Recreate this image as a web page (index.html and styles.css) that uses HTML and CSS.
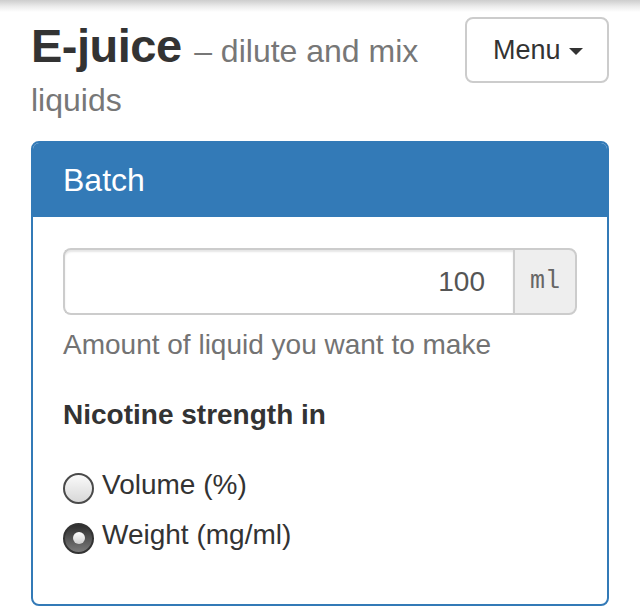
FILE: index.html
```html
<!DOCTYPE html>
<html lang="en">
<head>
    <meta charset="UTF-8">
    <meta name="viewport" content="width=device-width, initial-scale=1.0">
    <title>E-juice - dilute and mix liquids</title>
    <link rel="stylesheet" href="styles.css">
</head>
<body>
    <div class="topbar"></div>

    <div class="page">
        <div class="header">
            <h3 class="title">E-juice <small>– dilute and mix liquids</small></h3>
            <button class="menu-btn" type="button">
                <span>Menu</span>
                <span class="caret"></span>
            </button>
        </div>

        <div class="panel">
            <div class="panel-heading">
                <h3 class="panel-title">Batch</h3>
            </div>
            <div class="panel-body">
                <div class="input-group">
                    <input type="text" class="amount" value="100">
                    <span class="addon">ml</span>
                </div>
                <p class="help">Amount of liquid you want to make</p>

                <label class="group-label">Nicotine strength in</label>

                <label class="radio first">
                    <input type="radio" name="strength" value="volume">
                    <span>Volume (%)</span>
                </label>
                <label class="radio">
                    <input type="radio" name="strength" value="weight" checked>
                    <span>Weight (mg/ml)</span>
                </label>
            </div>
        </div>
    </div>
</body>
</html>
```

FILE: styles.css
```css
* {
    margin: 0;
    padding: 0;
    box-sizing: border-box;
}

body {
    font-family: "Liberation Sans", Arial, Helvetica, sans-serif;
    font-size: 28px;
    line-height: 40px;
    color: #333;
    background: #fff;
}

.topbar {
    height: 12px;
    background: linear-gradient(to bottom, #cdcdcd 0%, #ececec 55%, #fff 100%);
}

.page {
    padding: 5px 31px 0;
}

/* header */

.header {
    display: flex;
    align-items: flex-start;
    justify-content: space-between;
    gap: 20px;
}

.title {
    margin-top: 4px;
    font-size: 47px;
    line-height: 49px;
    font-weight: 700;
    color: #333;
    letter-spacing: -0.5px;
}

.title small {
    font-size: 32px;
    line-height: 1;
    font-weight: 400;
    color: #777;
    letter-spacing: 0;
}

.menu-btn {
    flex: none;
    display: flex;
    align-items: center;
    gap: 8px;
    height: 66px;
    width: 144px;
    padding: 0 26px;
    font-family: inherit;
    font-size: 27px;
    color: #333;
    background: #fff;
    border: 2px solid #ccc;
    border-radius: 8px;
}

.caret {
    width: 0;
    height: 0;
    margin-top: 2px;
    border-top: 7px solid #333;
    border-left: 7px solid transparent;
    border-right: 7px solid transparent;
}

/* panel */

.panel {
    margin-top: 22px;
    border: 2px solid #337ab7;
    border-radius: 8px;
    overflow: hidden;
}

.panel-heading {
    height: 74px;
    display: flex;
    align-items: center;
    padding: 0 30px;
    background: #337ab7;
}

.panel-title {
    font-size: 32px;
    font-weight: 400;
    color: #fff;
}

.panel-body {
    padding: 31px 30px 49px;
}

.input-group {
    display: flex;
    height: 67px;
}

.amount {
    flex: 1;
    min-width: 0;
    padding: 0 28px;
    font-family: inherit;
    font-size: 28px;
    color: #555;
    text-align: right;
    border: 2px solid #ccc;
    border-right: none;
    border-radius: 8px 0 0 8px;
    box-shadow: inset 0 2px 2px rgba(0, 0, 0, 0.1);
    outline: none;
}

.addon {
    width: 64px;
    display: flex;
    align-items: center;
    justify-content: center;
    font-family: "Liberation Mono", "Courier New", monospace;
    font-size: 25px;
    color: #666;
    background: #eee;
    border: 2px solid #ccc;
    border-radius: 0 8px 8px 0;
}

.help {
    margin-top: 10px;
    color: #737373;
}

.group-label {
    display: block;
    margin-top: 30px;
    font-weight: 700;
}

.radio {
    display: flex;
    align-items: center;
    gap: 8px;
    margin-top: 10px;
}

.radio.first {
    margin-top: 30px;
}

.radio input {
    appearance: none;
    -webkit-appearance: none;
    flex: none;
    width: 31px;
    height: 31px;
    margin-top: 6px;
    border-radius: 50%;
    border: 2px solid #4a4a4a;
    background: linear-gradient(to bottom, #fafafa, #d8d8d8);
    display: flex;
    align-items: center;
    justify-content: center;
}

.radio input:checked {
    border-color: #333;
    background: linear-gradient(to bottom, #2e2e2e, #7a7a7a);
}

.radio input:checked::after {
    content: "";
    width: 12px;
    height: 12px;
    border-radius: 50%;
    background: linear-gradient(to bottom, #fff, #cfcfcf);
}
```
